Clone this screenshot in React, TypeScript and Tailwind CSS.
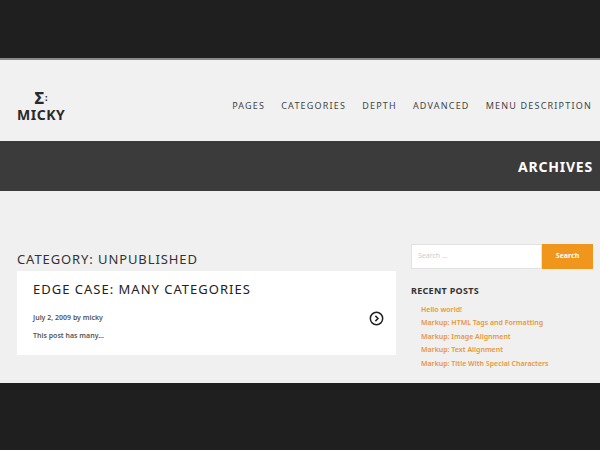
export default function App() {
  const nav = ["PAGES", "CATEGORIES", "DEPTH", "ADVANCED", "MENU DESCRIPTION"];
  const posts = [
    "Hello world!",
    "Markup: HTML Tags and Formatting",
    "Markup: Image Alignment",
    "Markup: Text Alignment",
    "Markup: Title With Special Characters",
  ];
  return (
    <div className="w-[600px] h-[450px] overflow-hidden bg-[#1f1f1f] font-['Open_Sans',sans-serif]">
      <div className="h-[60px] bg-[#1f1f1f] border-b-2 border-[#8a8a8a]" />
      <header className="h-[81px] bg-[#f1f1f1] flex items-center justify-between pl-[17px] pr-[8px] pt-[10px]">
        <div className="flex flex-col items-center text-[#2a2a2a] leading-none">
          <div className="flex items-start h-[16px]">
            <span className="text-[16px] font-extrabold leading-none">Σ</span>
            <span className="text-[9px] font-extrabold leading-none ml-[1px] mt-[3px]">:</span>
          </div>
          <span className="text-[14px] font-bold tracking-[0.5px] mt-[2px]">MICKY</span>
        </div>
        <nav className="flex gap-[16px] text-[9px] tracking-[1.2px] text-[#444]">
          {nav.map((n) => (
            <span key={n}>{n}</span>
          ))}
        </nav>
      </header>
      <div className="h-[50px] bg-[#3b3b3b] flex items-center justify-end pr-[7px]">
        <span className="text-white text-[14px] font-bold tracking-[0.8px]">ARCHIVES</span>
      </div>
      <main className="h-[192px] bg-[#f0f0f0] flex gap-[15px] pl-[17px] pr-[7px] pt-[62px]">
        <div className="w-[379px]">
          <h1 className="text-[13px] tracking-[0.9px] text-[#333] leading-none mb-[5px]">CATEGORY: UNPUBLISHED</h1>
          <div className="bg-white h-[84px] pl-[16px] pr-[12px] pt-[12px]">
            <h2 className="text-[13px] tracking-[1px] text-[#222] leading-none">EDGE CASE: MANY CATEGORIES</h2>
            <div className="flex items-center justify-between mt-[15px]">
              <span className="text-[7px] text-[#555] font-semibold">July 2, 2009 by micky</span>
              <svg width="15" height="15" viewBox="0 0 16 16" fill="none" stroke="#222" strokeWidth="1.6">
                <circle cx="8" cy="8" r="6.6" />
                <path d="M6.8 5.2 9.6 8 6.8 10.8" />
              </svg>
            </div>
            <p className="text-[7px] text-[#555] font-semibold mt-[5px]">This post has many...</p>
          </div>
        </div>
        <aside className="flex-1 -mt-[9px]">
          <div className="flex h-[25px]">
            <div className="flex-1 bg-white border border-[#e2e2e2] flex items-center pl-[6px] text-[7px] text-[#ccc]">Search ...</div>
            <div className="w-[51px] bg-[#f0961d] text-white text-[7px] font-bold flex items-center justify-center">Search</div>
          </div>
          <h3 className="text-[9px] font-bold text-[#333] tracking-[0.3px] mt-[15px]">RECENT POSTS</h3>
          <ul className="mt-[6px] pl-[10px] flex flex-col gap-[1px]">
            {posts.map((p) => (
              <li key={p} className="text-[7px] font-semibold text-[#e8963a] leading-[12.5px]">{p}</li>
            ))}
          </ul>
        </aside>
      </main>
    </div>
  );
}
